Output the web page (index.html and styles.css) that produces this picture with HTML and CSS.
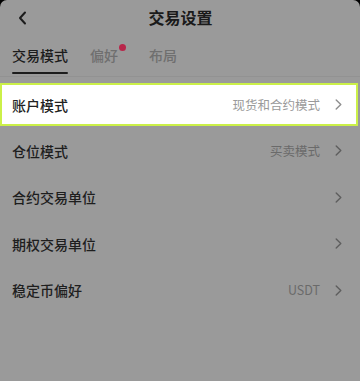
FILE: index.html
```html
<!DOCTYPE html>
<html lang="zh-CN">
<head>
<meta charset="utf-8">
<title>交易设置</title>
<link rel="stylesheet" href="styles.css">
</head>
<body>
<div class="screen">
  <header class="topbar">
    <div class="back">
      <svg width="9" height="14" viewBox="0 0 9 14"><polyline points="7,1.5 2,7 7,12.5" fill="none" stroke="#1c1c1c" stroke-width="2" stroke-linecap="round" stroke-linejoin="round"/></svg>
    </div>
    <h1 class="title">交易设置</h1>
    <div></div>
  </header>
  <nav class="tabs">
    <div class="tab active"><span class="label">交易模式</span><span class="bar"></span></div>
    <div class="tab"><span class="label dotted">偏好<i class="dot"></i></span></div>
    <div class="tab"><span class="label">布局</span></div>
  </nav>
  <ul class="list">
    <li class="row highlight">
      <span class="name">账户模式</span>
      <span class="value">现货和合约模式</span>
      <svg class="chev" width="7" height="11" viewBox="0 0 7 11"><polyline points="1.2,1 5.8,5.5 1.2,10" fill="none" stroke-width="1.4" stroke-linecap="round" stroke-linejoin="round"/></svg>
    </li>
    <li class="row">
      <span class="name">仓位模式</span>
      <span class="value">买卖模式</span>
      <svg class="chev" width="7" height="11" viewBox="0 0 7 11"><polyline points="1.2,1 5.8,5.5 1.2,10" fill="none" stroke-width="1.4" stroke-linecap="round" stroke-linejoin="round"/></svg>
    </li>
    <li class="row">
      <span class="name">合约交易单位</span>
      <span class="value"></span>
      <svg class="chev" width="7" height="11" viewBox="0 0 7 11"><polyline points="1.2,1 5.8,5.5 1.2,10" fill="none" stroke-width="1.4" stroke-linecap="round" stroke-linejoin="round"/></svg>
    </li>
    <li class="row">
      <span class="name">期权交易单位</span>
      <span class="value"></span>
      <svg class="chev" width="7" height="11" viewBox="0 0 7 11"><polyline points="1.2,1 5.8,5.5 1.2,10" fill="none" stroke-width="1.4" stroke-linecap="round" stroke-linejoin="round"/></svg>
    </li>
    <li class="row">
      <span class="name">稳定币偏好</span>
      <span class="value">USDT</span>
      <svg class="chev" width="7" height="11" viewBox="0 0 7 11"><polyline points="1.2,1 5.8,5.5 1.2,10" fill="none" stroke-width="1.4" stroke-linecap="round" stroke-linejoin="round"/></svg>
    </li>
  </ul>
</div>
</body>
</html>
```

FILE: styles.css
```css
* { box-sizing: border-box; margin: 0; padding: 0; }
html, body {
  width: 360px;
  height: 381px;
  background: #000;
  overflow: hidden;
}
body {
  font-family: "Noto Sans CJK SC", "Noto Sans", sans-serif;
}
.screen {
  width: 360px;
  height: 381px;
  background: #9a9a9a;
  border-radius: 7px 7px 0 0;
  display: flex;
  flex-direction: column;
}
.topbar {
  height: 34px;
  display: grid;
  grid-template-columns: 1fr auto 1fr;
  align-items: center;
}
.back {
  padding-left: 18px;
  display: flex;
  align-items: center;
  padding-top: 1px;
}
.title {
  font-size: 16px;
  font-weight: 700;
  color: #1a1a1a;
  line-height: 20px;
  margin-left: 1px;
}
.tabs {
  display: flex;
  padding: 0 12px 2px;
  border-bottom: 1px solid #929292;
}
.tab {
  display: flex;
  flex-direction: column;
  align-items: stretch;
  padding-top: 12px;
}
.tab + .tab { margin-left: 22px; }
.tab:nth-child(3) { margin-left: 31px; }
.label {
  font-size: 14px;
  line-height: 18px;
  font-weight: 500;
  color: #6f6f6f;
  position: relative;
  white-space: nowrap;
}
.tab.active .label { color: #1c1c1c; }
.bar {
  display: block;
  height: 2px;
  margin-top: 8px;
  background: #1c1c1c;
  border-radius: 1px;
}
.dot {
  position: absolute;
  left: calc(100% + 1px);
  top: -2px;
  width: 7px;
  height: 7px;
  border-radius: 50%;
  background: #b8264a;
}
.list {
  list-style: none;
  padding-top: 4px;
}
.row {
  height: 46.5px;
  display: flex;
  align-items: center;
  padding: 0 18px 0 12px;
}
.name {
  font-size: 14px;
  font-weight: 500;
  color: #1e1e1e;
  line-height: 18px;
  flex: 1;
}
.value {
  font-size: 12.5px;
  color: #6a6a6a;
  line-height: 16px;
  margin-right: 15px;
}
.chev { stroke: #5e5e5e; display: block; }
.row.highlight {
  height: 43px;
  margin: 2px 2px 1.5px 0;
  background: #fff;
  border: 2px solid #cbf048;
  padding: 0 14px 0 10px;
}
.row.highlight .name { color: #222; }
.row.highlight .value { color: #9a9a9a; }
.row.highlight .chev { stroke: #8e8e8e; }
```
